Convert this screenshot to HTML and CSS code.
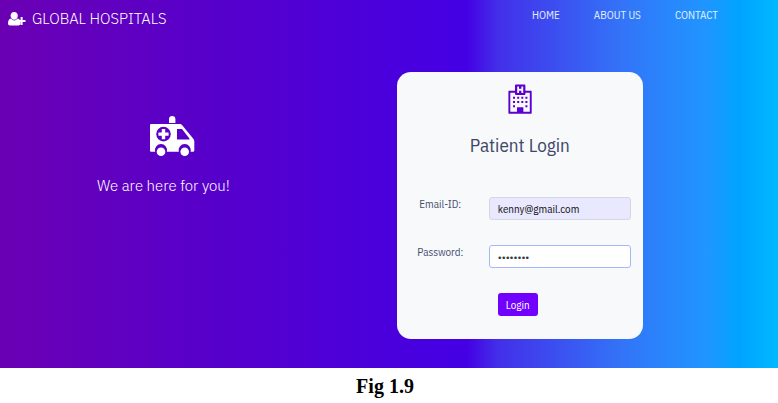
FILE: index.html
```html
<!DOCTYPE html>
<html lang="en">
<head>
<meta charset="utf-8">
<title>Global Hospitals</title>
<link rel="stylesheet" href="styles.css">
</head>
<body>
<div class="hero">
  <header class="navbar">
    <a class="brand" href="#">
      <svg class="brand-icon" viewBox="0 0 18 14" aria-hidden="true">
        <path d="M6.2 0C8.4 0 9.8 1.6 9.8 3.8 9.8 6 8.4 7.8 6.2 7.8S2.600 6 2.600 3.800C2.600 1.600 4 0 6.200 0Z"/>
        <path d="M3 6.500C4 7.800 5 8.400 6.200 8.400S8.500 7.800 9.500 6.500L11.500 7.200V10H12.500V12.600Q11.800 13.400 10.500 13.400H2Q0 13.400 0 11.400C0 9 .8 6.800 3 6.500Z"/>
        <path d="M12.600 5H14.600V8H17.500V10H14.600V13H12.600V10H9.800V8H12.600Z"/>
      </svg>
      <span>GLOBAL HOSPITALS</span>
    </a>
    <nav class="links">
      <a href="#">HOME</a>
      <a href="#">ABOUT US</a>
      <a href="#">CONTACT</a>
    </nav>
  </header>
  <main class="content">
    <section class="welcome">
      <svg class="ambulance" viewBox="0 0 46 42" aria-hidden="true">
        <path fill="#fff" d="M20 8V4C20 2 21.300 1 23.200 1S26.400 2 26.400 4V8Z"/>
        <path fill="#fff" fill-rule="evenodd" d="M2 9H31Q32 9 33 10L44.500 24Q45.300 25 45.300 26.500V35.500Q45.300 36.700 44 36.700H41.600A6.100 6.100 0 1 0 29.800 36.700H17.900A6.100 6.100 0 1 0 6.100 36.700H2Q1 36.700 1 35.700V10Q1 9 2 9ZM14.500 11.800A7.300 7.300 0 1 0 14.500 26.400A7.300 7.300 0 1 0 14.500 11.800ZM28 14V24.600H40.400V23.400L33 14Z"/>
        <path fill="#fff" d="M12.800 14H16.200V17.400H19.600V20.800H16.200V24.200H12.800V20.800H9.400V17.400H12.800Z"/>
        <circle fill="#fff" cx="12" cy="36.800" r="4.300"/>
        <circle fill="#fff" cx="35.700" cy="36.800" r="4.300"/>
      </svg>
      <p class="tagline">We are here for you!</p>
    </section>
    <section class="card">
      <svg class="hospital" viewBox="0 0 24 30" aria-hidden="true">
        <path fill-rule="evenodd" d="M1 6.800H7V1.500Q7 .6 8 .6H16.500Q17.400 .6 17.400 1.500V6.800H23Q23.700 6.800 23.700 7.500V29Q23.700 29.700 23 29.700H1Q.4 29.700 .4 29V7.500Q.4 6.800 1 6.800ZM2.300 8.700V27.700H9V23.500H15.200V27.700H21.800V8.700H17.400V10Q17.400 11 16.500 11H8Q7 11 7 10V8.700ZM9.200 2.500V9H11V6.700H13.400V9H15.200V2.500H13.400V4.800H11V2.500Z"/>
        <path d="M9 23.500h6.200v4.500H9zM5 12.700h2v2H5zM9.200 12.700h2v2h-2zM13.300 12.700h2v2h-2zM17.400 12.700h2v2h-2zM5 17h2v2H5zM9.200 17h2v2h-2zM13.300 17h2v2h-2zM17.400 17h2v2h-2zM5 21.200h2v2H5zM17.400 21.200h2v2h-2z"/>
      </svg>
      <h1>Patient Login</h1>
      <form class="form">
        <div class="row">
          <label for="email">Email-ID:</label>
          <input class="email" id="email" type="email" value="kenny@gmail.com">
        </div>
        <div class="row">
          <label for="password">Password:</label>
          <input class="password" id="password" type="password" value="password">
        </div>
        <button type="button">Login</button>
      </form>
    </section>
  </main>
</div>
<p class="caption">Fig 1.9</p>
</body>
</html>
```
FILE: styles.css
```css
* { box-sizing: border-box; }

body {
  margin: 0;
  background: #fff;
  font-family: "IBM Plex Sans Condensed", "IBM Plex Sans", Roboto, "Liberation Sans", sans-serif;
  font-size: 11px;
  line-height: 16px;
}

.hero {
  padding-bottom: 29px;
  background: linear-gradient(to right, #6b00b3 0%, #5700cb 27%, #4400e4 60%, #432fe9 64%, #3374f8 80%, #1f96ff 91%, #00a4ff 95%, #00b8ff 100%);
}

.navbar {
  display: flex;
  justify-content: space-between;
  align-items: flex-start;
  height: 72px;
  padding: 7px 60px 0 8px;
}

a {
  color: #fff;
  text-decoration: none;
}

.brand {
  display: flex;
  align-items: center;
  gap: 6px;
  font-family: "IBM Plex Sans", Roboto, "Liberation Sans", sans-serif;
  font-size: 15px;
  font-weight: 300;
  line-height: 24px;
}

.brand-icon {
  width: 18px;
  height: 14px;
  fill: #fff;
}

.links {
  display: flex;
  gap: 34px;
  color: #fff;
}

.links a { color: #e2f0ff; }

.content {
  display: grid;
  grid-template-columns: 51% 246px;
}

.welcome {
  display: flex;
  flex-direction: column;
  align-items: center;
  padding: 43px 70px 0 0;
  color: #fff;
}

.ambulance {
  width: 46px;
  height: 42px;
  margin-left: 17px;
}

.tagline {
  margin: 17px 0 0;
  font-family: "IBM Plex Sans", Roboto, "Liberation Sans", sans-serif;
  font-size: 15px;
  font-weight: 300;
  line-height: 24px;
}

.card {
  display: flex;
  flex-direction: column;
  align-items: center;
  padding: 12px 12px 23px;
  border-radius: 14px;
  background: #f8f9fb;
  color: #495057;
}

.hospital {
  width: 24px;
  height: 30px;
  fill: #5a00d0;
}

h1 {
  margin: 19px 0 40px;
  color: #3f4868;
  font-size: 19px;
  font-weight: 400;
  line-height: 24px;
}

.form {
  display: flex;
  flex-direction: column;
  gap: 25px;
  width: 100%;
}

.row {
  display: grid;
  grid-template-columns: 63px 1fr;
  gap: 17px;
}

label {
  color: #495070;
  line-height: 14px;
  text-align: center;
}

input {
  width: 100%;
  height: 23px;
  padding: 0 8px;
  border: 1px solid #d5d8e4;
  border-radius: 3px;
  background: #fff;
  color: #343a40;
  font: inherit;
}

.email {
  background: #e8e8fe;
  color: #111;
}

.password { border-color: #a5b7f8; }

button {
  align-self: flex-start;
  width: 40px;
  height: 23px;
  margin-left: 89px;
  padding: 0;
  border: 0;
  border-radius: 3px;
  background: #7200ff;
  color: #fff;
  font: inherit;
}

.caption {
  margin: 6px 0 0;
  padding-right: 8px;
  color: #000;
  font: bold 20px/24px "Liberation Serif", serif;
  text-align: center;
}
```
